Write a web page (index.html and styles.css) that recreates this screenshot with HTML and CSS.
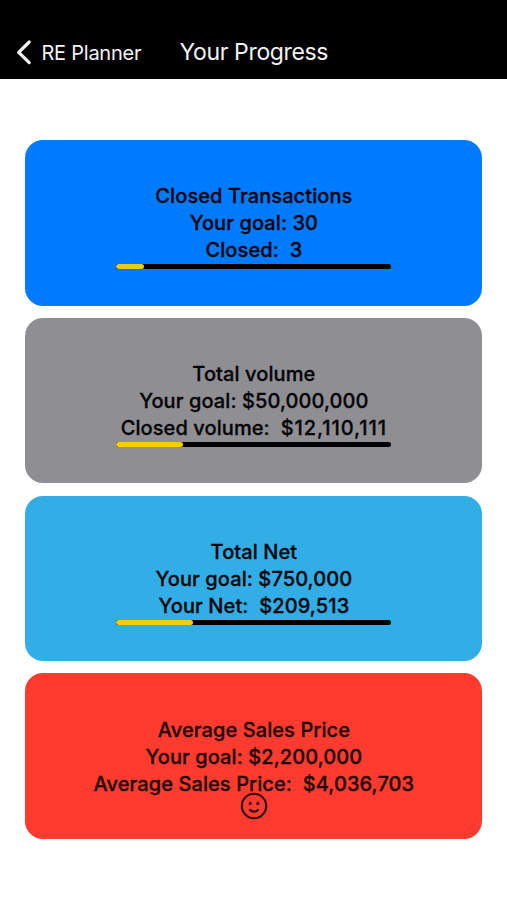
FILE: index.html
```html
<!DOCTYPE html>
<html lang="en">
<head>
<meta charset="utf-8">
<title>Your Progress</title>
<link rel="stylesheet" href="styles.css">
</head>
<body>
<header class="navbar">
  <a class="back"><svg class="chevron" viewBox="0 0 16 26"><path d="M13.2 3 2.7 13.4l10.5 10.2"/></svg><span class="back-label">RE Planner</span></a>
  <h1 class="title">Your Progress</h1>
</header>
<main class="cards">
  <section class="card blue">
    <p>Closed Transactions</p>
    <p>Your goal: 30</p>
    <p>Closed: &nbsp;3</p>
    <div class="bar"><div class="fill" style="width:10.2%"></div></div>
  </section>
  <section class="card gray">
    <p>Total volume</p>
    <p>Your goal: $50,000,000</p>
    <p>Closed volume: &nbsp;<span class="amount">$12,110,111</span></p>
    <div class="bar"><div class="fill" style="width:24.2%"></div></div>
  </section>
  <section class="card cyan">
    <p>Total Net</p>
    <p>Your goal: $750,000</p>
    <p>Your Net: &nbsp;$209,513</p>
    <div class="bar"><div class="fill" style="width:27.9%"></div></div>
  </section>
  <section class="card red">
    <p>Average Sales Price</p>
    <p>Your goal: $2,200,000</p>
    <p>Average Sales Price: &nbsp;$4,036,703</p>
    <svg class="smile" viewBox="0 0 28 28"><circle cx="14" cy="14" r="12.2"/><path d="M10.1 18c2 2.1 5.8 2.1 7.8 0"/><ellipse class="eye" cx="10.2" cy="11.5" rx="1.5" ry="1.7"/><ellipse class="eye" cx="17.8" cy="11.5" rx="1.5" ry="1.7"/></svg>
  </section>
</main>
</body>
</html>
```

FILE: styles.css
```css
* { box-sizing: border-box; margin: 0; padding: 0; }
body { background: #fff; font-family: Inter, "Liberation Sans", sans-serif; color: #050507; }
.navbar { height: 79px; background: #000; color: #f4f4f4; display: flex; align-items: flex-start; padding: 38px 0 0 16px; }
.back { display: flex; align-items: center; width: 163.5px; height: 28px; }
.chevron { width: 16px; height: 26px; fill: none; stroke: #f4f4f4; stroke-width: 3.2; stroke-linecap: round; stroke-linejoin: round; }
.back-label { font-size: 20px; margin: 1px 0 0 9.5px; letter-spacing: -0.25px; white-space: nowrap; }
.title { font-size: 23px; font-weight: 400; line-height: 28px; letter-spacing: -0.35px; white-space: nowrap; }
.cards { padding: 61px 24.6px 0 25.4px; display: flex; flex-direction: column; gap: 12.3px; }
.card { height: 165.5px; border-radius: 18px; padding-top: 43.4px; display: flex; flex-direction: column; align-items: center; }
.card p { height: 27px; line-height: 27px; font-size: 20px; font-weight: 500; white-space: nowrap; letter-spacing: 0.09px; -webkit-text-stroke: 0.3px currentColor; }
.amount { letter-spacing: 0.95px; }
.blue { background: #007aff; }
.gray { background: #8e8e93; }
.cyan { background: #32ade6; }
.red { background: #ff3b30; color: #1c0504; }
.bar { width: 275px; height: 5px; border-radius: 3px; background: #000; overflow: hidden; }
.fill { height: 100%; background: #fc0; border-radius: 3px; }
.blue .fill { background: #e8cb1a; }
.cyan .fill { background: #f5cb10; }
.smile { width: 28px; height: 28px; margin-top: -6px; fill: none; stroke: #260604; stroke-width: 2.1; stroke-linecap: round; }
.smile .eye { fill: #260604; stroke: none; }
```
